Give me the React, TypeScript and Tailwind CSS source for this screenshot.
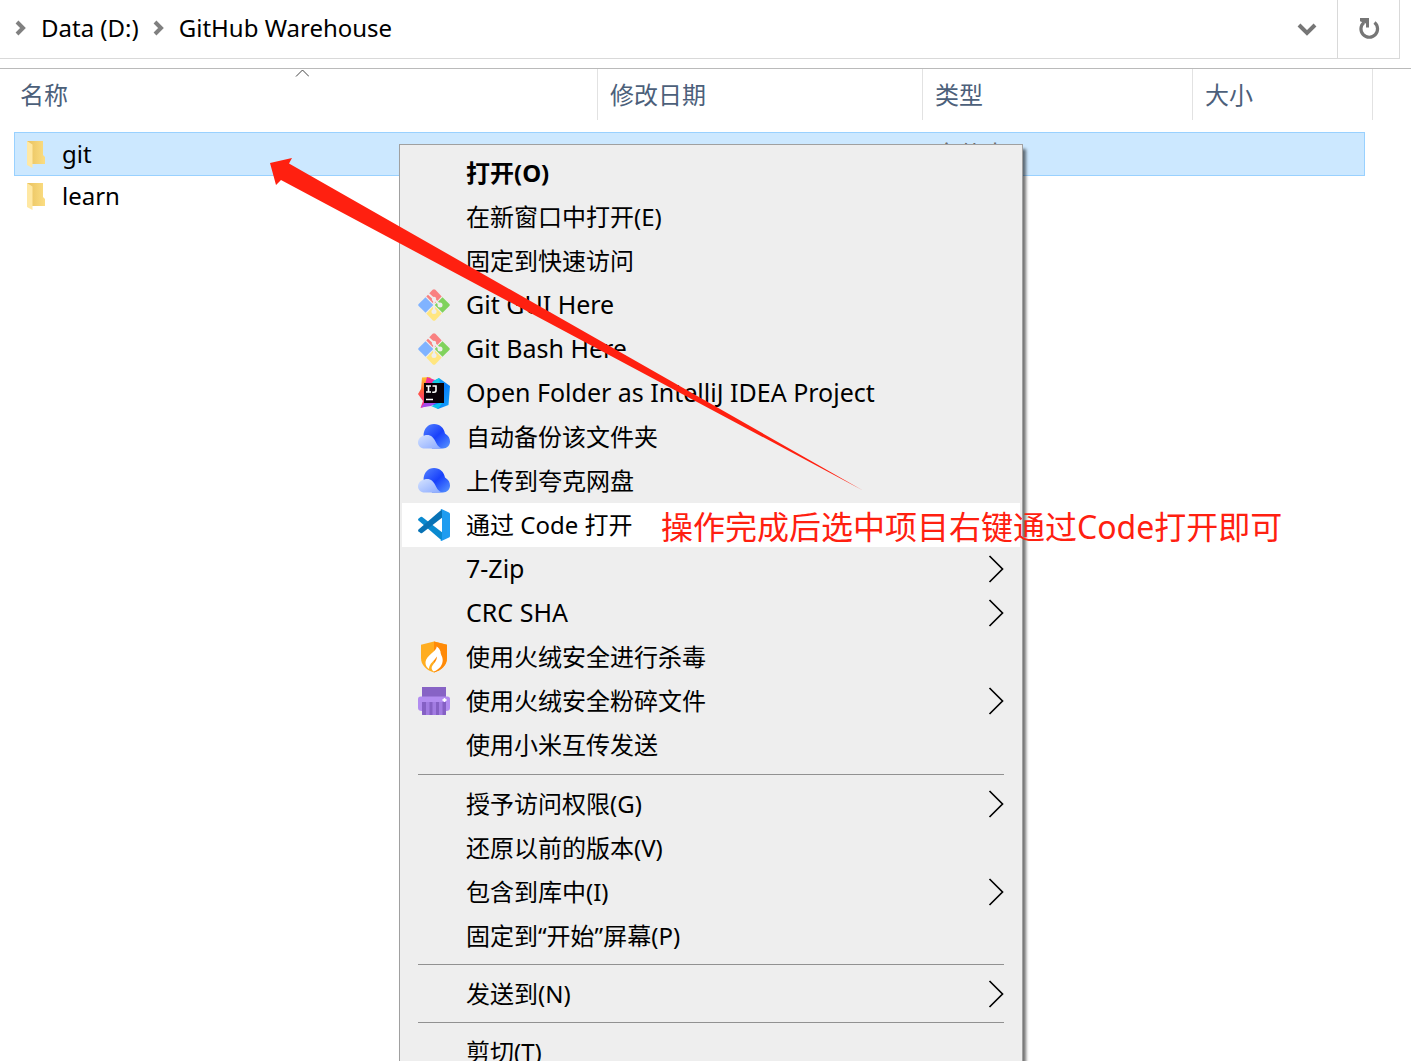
import type { ReactNode } from "react";

function GitIcon() {
  return (
    <svg viewBox="0 0 32 32" className="size-8" aria-hidden="true">
      <path d="M8.300 7.400 14.600 .8Q16 -.5 17.400 .8L23.700 7.400 16 15.200z" fill="#f98181" />
      <path d="M24.500 8.200 31.300 15Q32.300 16 31.300 17L24.500 23.800 16.700 16z" fill="#80d25c" />
      <path d="M7.500 8.200 15.300 16 7.500 23.800 .7 17Q-.3 16 .7 15z" fill="#80b3ff" />
      <path d="M16 16.800 23.700 24.600 17.400 31.200Q16 32.500 14.600 31.200L8.300 24.600z" fill="#ffe680" />
      <path d="M9.500 4 15.500 9.500 21.500 15.500M16 10V23" fill="none" stroke="#eeeeee" strokeWidth="1.800" />
      <circle cx="16" cy="10" r="2.200" fill="#eeeeee" />
      <circle cx="22" cy="16" r="2.500" fill="#eeeeee" />
      <circle cx="16" cy="22.500" r="2.500" fill="#eeeeee" />
    </svg>
  );
}

function IdeaIcon() {
  return (
    <svg viewBox="0 0 32 32" className="size-8" aria-hidden="true">
      <defs>
        <linearGradient id="idea-warm" x1="0" y1="0" x2="0" y2="1">
          <stop offset="0" stopColor="#ffc52e" />
          <stop offset=".45" stopColor="#ff5c3c" />
          <stop offset="1" stopColor="#ff2495" />
        </linearGradient>
        <linearGradient id="idea-cool" x1="0" y1="0" x2="1" y2="1">
          <stop offset="0" stopColor="#13c7f2" />
          <stop offset=".5" stopColor="#087cfa" />
          <stop offset="1" stopColor="#19a8fb" />
        </linearGradient>
      </defs>
      <path d="M4 .5 12 0 18 8V26L2.500 31 5 24 0 17 3 12z" fill="url(#idea-warm)" />
      <path d="M9 0 17 3 14 12 7 8z" fill="#f0319c" />
      <path d="M15 4 21 1 32 9 30.500 28 20 32 13 26V10z" fill="url(#idea-cool)" />
      <path d="M15 5 21 1 22 8H13z" fill="#12cbe3" />
      <path d="M3 30.500 7 25H20L13 29z" fill="#a34bea" />
      <path d="M13 29 25 25 20 32z" fill="#0cc2ee" />
      <path d="M6 6H26V26H6z" fill="#080008" />
      <path d="M8 9H13M10.500 9V15M8 15H13M14.500 9H18V13.500Q18 15.200 15.800 15.200H14.200M8 22.500H15" fill="none" stroke="#fff" strokeWidth="1.600" />
    </svg>
  );
}

function CloudIcon() {
  return (
    <svg viewBox="0 0 32 32" className="size-8" aria-hidden="true">
      <defs>
        <linearGradient id="cloud-dark" x1="0" y1="0" x2="1" y2="1">
          <stop offset="0" stopColor="#5483ff" />
          <stop offset=".5" stopColor="#1941fb" />
          <stop offset="1" stopColor="#5a98ff" />
        </linearGradient>
        <linearGradient id="cloud-light" x1="0" y1="0" x2="1" y2="1">
          <stop offset="0" stopColor="#d4e2ff" />
          <stop offset="1" stopColor="#88a8ff" />
        </linearGradient>
      </defs>
      <path d="M5.500 14.500C5.800 7.500 10 3 16 3S26 7 27 12.500C30.500 14.500 32 17.200 32 20.500 32 24.500 29 27.500 25 27.500H14z" fill="url(#cloud-dark)" />
      <path d="M6.500 14.500C12 13 15.300 16.200 17.200 20 19 23.500 20.500 26.500 24.500 27.500H6.500C2.800 27.500 0 24.800 0 21.500 0 17.800 3 15 6.500 14.500z" fill="url(#cloud-light)" />
    </svg>
  );
}

function CodeIcon() {
  return (
    <svg viewBox="0 0 32 32" className="size-8" aria-hidden="true">
      <path d="M.4 9.800 2.600 8Q3.300 7.500 4.200 8.100L24 23.200V31.800L.5 11.400Q-.3 10.600 .4 9.800z" fill="#0a8ad0" />
      <path d="M.4 22.200 2.600 24Q3.300 24.500 4.200 23.900L24 8.800V.3L.5 20.600Q-.3 21.400 .4 22.200z" fill="#0872b5" />
      <path d="M24 .2 31 3.500Q32 4 32 5V27Q32 28 31 28.500L24 31.800Q23 32.200 22.300 31.400 24 31.500 24 29.500V2.500Q24 .5 22.300 .6 23-.2 24 .2z" fill="#1f9cf0" />
    </svg>
  );
}

function ShieldIcon() {
  return (
    <svg viewBox="0 0 32 32" className="size-8" aria-hidden="true">
      <path d="M16 .5 29 3.800V17C29 24.500 23 29.500 16 31.500 9 29.500 3 24.500 3 17V3.800z" fill="#ffad20" />
      <path d="M16 .5 29 3.800V17C29 24.500 23 29.500 16 31.500z" fill="#ff8a08" />
      <path d="M18.700 5.500C19 10 8 14.500 7.500 21 7.200 24.500 9 26.500 11 28 11 22 17 20 18.600 15.500 19.400 18.500 17 21 14.500 24.500 13 26.500 13.400 29 15.800 30.500 21.500 28.500 24.700 24 24.700 19 24.700 15 22.500 14.200 22.500 10.500 21.800 8.300 20.500 6.500 18.700 5.500z" fill="#fff" />
    </svg>
  );
}

function ShredderIcon() {
  return (
    <svg viewBox="0 0 32 32" className="size-8" aria-hidden="true">
      <path d="M4 2H28V14H4z" fill="#8763c5" />
      <path d="M2.500 11.500H29.500Q32 11.500 32 14V23Q32 26 28 26H4Q0 26 0 23V14Q0 11.500 2.500 11.500z" fill="#b28cf0" />
      <path d="M4 17H28V30H4z" fill="#a27ce2" />
      <path d="M4 17H8V30H5Q4 30 4 29zM11.500 17H14.500V30H11.500zM18 17H21V30H18zM24.500 17H28V29Q28 30 27 30H24.500z" fill="#8560c4" />
      <path d="M26.500 13 27.200 14.300 28.500 15 27.200 15.700 26.500 17 25.800 15.700 24.500 15 25.800 14.300z" fill="#fff" stroke="#fff" />
    </svg>
  );
}

function FolderIcon() {
  return (
    <svg viewBox="0 0 20 28" className="h-7 w-5 shrink-0" aria-hidden="true">
      <defs>
        <linearGradient id="folder-back" x1="0" x2="1">
          <stop offset="0" stopColor="#e9c25f" />
          <stop offset="1" stopColor="#fbdd82" />
        </linearGradient>
      </defs>
      <path d="M1 1H17V15L19 17V24H5z" fill="url(#folder-back)" />
      <path d="M1 1 6.500 4.500V28L1 25z" fill="#ffe8a3" />
    </svg>
  );
}

function Crumb() {
  return (
    <svg viewBox="0 0 12 16" className="h-4 w-3 shrink-0" aria-hidden="true">
      <path d="M2 2 8 8 2 14" fill="none" stroke="#808080" strokeWidth="4" />
    </svg>
  );
}

type Item = { label: string; icon?: ReactNode; sub?: boolean; bold?: boolean; active?: boolean; latin?: boolean };

const groups: Item[][] = [
  [
    { label: "打开(O)", bold: true },
    { label: "在新窗口中打开(E)" },
    { label: "固定到快速访问" },
    { label: "Git GUI Here", icon: <GitIcon />, latin: true },
    { label: "Git Bash Here", icon: <GitIcon />, latin: true },
    { label: "Open Folder as IntelliJ IDEA Project", icon: <IdeaIcon />, latin: true },
    { label: "自动备份该文件夹", icon: <CloudIcon /> },
    { label: "上传到夸克网盘", icon: <CloudIcon /> },
    { label: "通过 Code 打开", icon: <CodeIcon />, active: true },
    { label: "7-Zip", sub: true, latin: true },
    { label: "CRC SHA", sub: true, latin: true },
    { label: "使用火绒安全进行杀毒", icon: <ShieldIcon /> },
    { label: "使用火绒安全粉碎文件", icon: <ShredderIcon />, sub: true },
    { label: "使用小米互传发送" },
  ],
  [
    { label: "授予访问权限(G)", sub: true },
    { label: "还原以前的版本(V)" },
    { label: "包含到库中(I)", sub: true },
    { label: "固定到“开始”屏幕(P)" },
  ],
  [{ label: "发送到(N)", sub: true }],
  [{ label: "剪切(T)" }],
];

function MenuRow({ item }: { item: Item }) {
  return (
    <button
      type="button"
      role="menuitem"
      className={`flex h-11 w-full items-center px-4 text-left ${item.active ? "bg-white" : ""} ${item.bold ? "font-bold" : ""} ${item.latin ? "text-[25px]" : ""}`}
    >
      <span className="mr-4 size-8 shrink-0">{item.icon}</span>
      <span className="grow whitespace-nowrap">{item.label}</span>
      {item.sub && (
        <svg viewBox="0 0 16 28" className="h-7 w-4 shrink-0" aria-hidden="true">
          <path d="M1.500 1 14.500 14 1.500 27" fill="none" stroke="#000" strokeWidth="1.700" />
        </svg>
      )}
    </button>
  );
}

function ContextMenu() {
  return (
    <div
      role="menu"
      className="absolute top-36 left-[399px] w-[624px] border border-[#a0a0a0] bg-[#eeeeee] px-0.5 py-1.5 shadow-[3px_5px_3px_rgba(0,0,0,0.55)]"
    >
      {groups.map((group, i) => (
        <div key={i} role="group">
          {i > 0 && <hr className="mx-4 mt-1.5 mb-[7px] border-[#919191] first-of-type:mt-1.5" />}
          {group.map((item) => (
            <MenuRow key={item.label} item={item} />
          ))}
          {i === 0 && <div className="h-px" />}
        </div>
      ))}
    </div>
  );
}

function AddressBar() {
  return (
    <nav className="mr-[11px] flex h-[59px] border-r border-b border-[#d9d9d9]">
      <div className="flex grow items-center pb-0.5 pl-[15px]">
        <Crumb />
        <a href="#data" className="mx-3.5">Data (D:)</a>
        <Crumb />
        <a href="#warehouse" className="ml-3.5">GitHub Warehouse</a>
      </div>
      <button type="button" aria-label="Previous locations" className="flex w-[60px] items-center justify-center">
        <svg viewBox="0 0 20 14" className="h-3.5 w-5" aria-hidden="true">
          <path d="M2 3 10 11 18 3" fill="none" stroke="#767676" strokeWidth="4" />
        </svg>
      </button>
      <button type="button" aria-label="Refresh" className="flex w-[62px] items-center justify-center border-l border-[#d9d9d9]">
        <svg viewBox="0 0 22 22" className="size-[22px]" aria-hidden="true">
          <path d="M16.500 4.500A8.300 8.300 0 1 1 6 4.500" fill="none" stroke="#767676" strokeWidth="3.200" />
          <path d="M2 0H11V9.500H8V5.500L2 3.200z" fill="#767676" />
        </svg>
      </button>
    </nav>
  );
}

const columns = ["名称", "修改日期", "类型", "大小"];
const files = [
  { name: "git", selected: true },
  { name: "learn", selected: false },
];

function FileTable() {
  return (
    <div className="relative mt-[9px] border-t border-[#bababa] pr-[47px] pl-[15px]">
      <svg viewBox="0 0 14 8" className="absolute top-0 left-[295px] h-2 w-3.5" aria-hidden="true">
        <path d="M1 7.500 7.500 1 14 7.500" fill="none" stroke="#444" />
      </svg>
      <table className="w-full table-fixed border-collapse">
        <colgroup>
          <col className="w-[583px]" />
          <col className="w-[325px]" />
          <col className="w-[270px]" />
          <col />
        </colgroup>
        <thead>
          <tr className="text-left text-[#4c607a]">
            {columns.map((title, i) => (
              <th key={title} scope="col" className="p-0 pb-[13px] font-normal">
                <div
                  className={`flex h-[51px] items-center border-r border-[#e2e2e2] ${i === 0 ? "pl-[5px]" : "pl-3"} ${i === 3 ? "-mr-[9px]" : ""}`}
                >
                  {title}
                </div>
              </th>
            ))}
          </tr>
        </thead>
        <tbody>
          {files.map((file) => (
            <tr
              key={file.name}
              className={`h-[42px] ${file.selected ? "bg-[#cce8ff] outline outline-[#99d1ff]" : ""}`}
            >
              <td className="p-0">
                <div className="flex items-center pl-[11px]">
                  <FolderIcon />
                  <span className="ml-4">{file.name}</span>
                </div>
              </td>
              <td className="p-0" />
              <td className="p-0 pl-3 text-[#6d6d6d]">文件夹</td>
              <td className="p-0" />
            </tr>
          ))}
        </tbody>
      </table>
    </div>
  );
}

export default function App() {
  return (
    <main className="relative h-screen overflow-hidden bg-white font-['Noto_Sans','Noto_Sans_CJK_SC',sans-serif] text-2xl text-black">
      <AddressBar />
      <FileTable />
      <ContextMenu />
      <svg viewBox="0 0 600 340" className="pointer-events-none absolute top-[155px] left-[265px] h-[340px] w-[600px]" aria-hidden="true">
        <path d="M5 8 27 3 24 8.500 598 335.500 16 25 11 30z" fill="#ff2010" />
      </svg>
      <p className="absolute top-[503px] left-[661px] text-[32px] leading-[48px] whitespace-nowrap text-[#ff2010]">
        操作完成后选中项目右键通过Code打开即可
      </p>
    </main>
  );
}
